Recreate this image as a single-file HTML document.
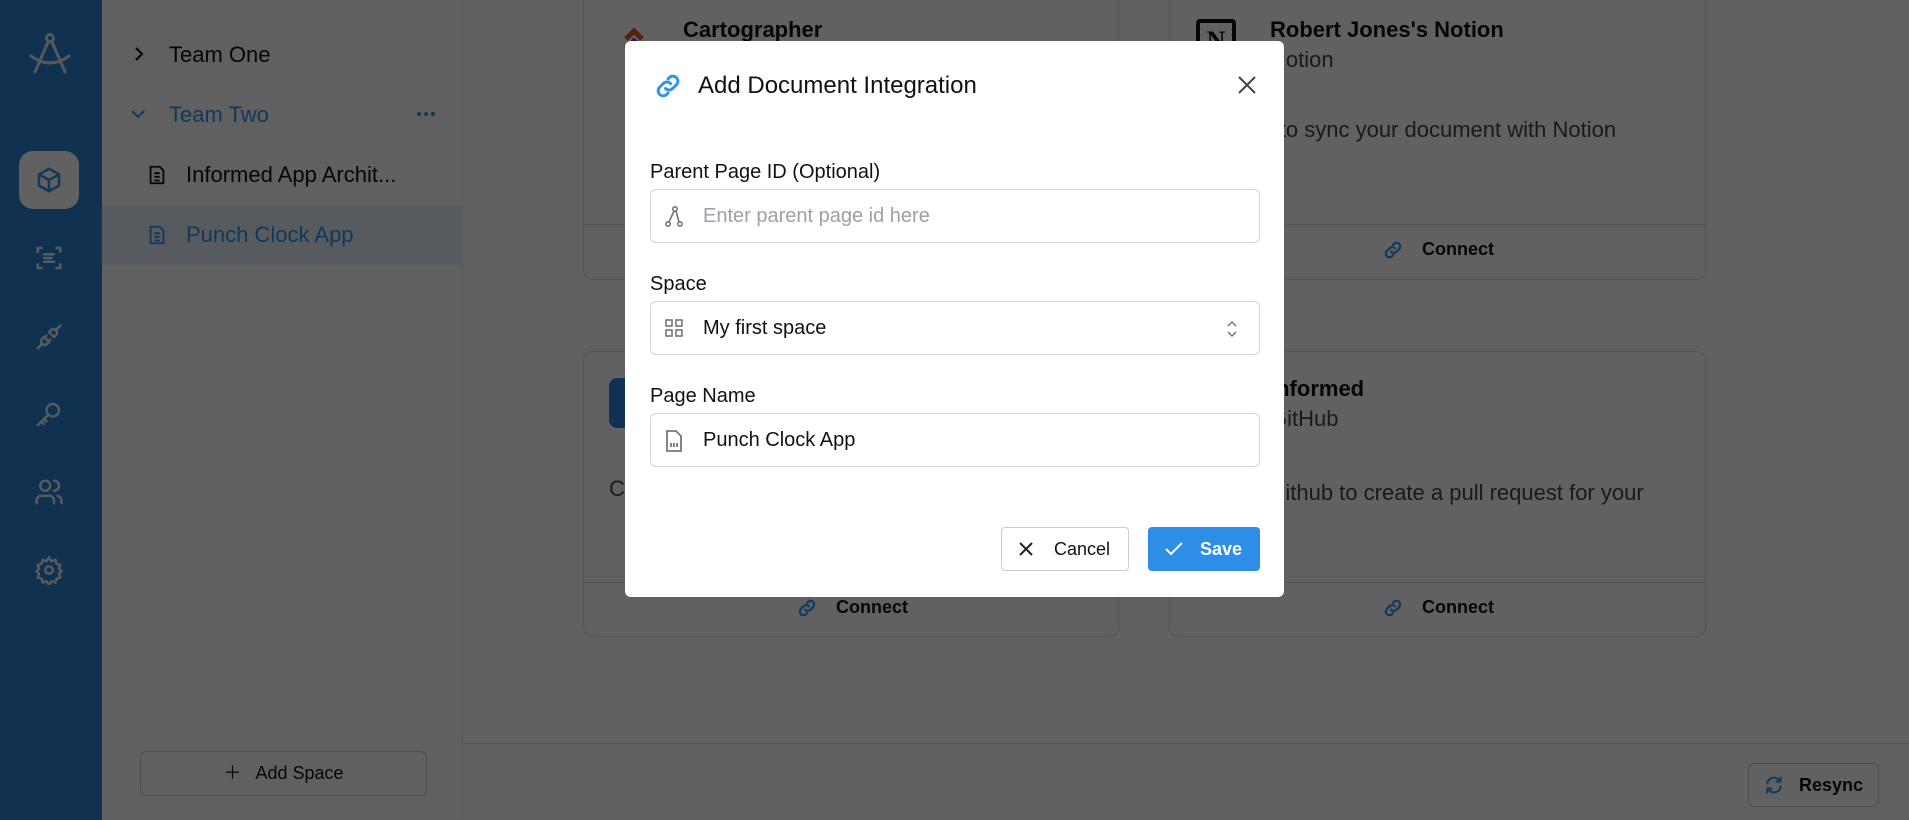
<!DOCTYPE html>
<html><head><meta charset="utf-8"><style>
*{box-sizing:border-box;margin:0;padding:0}
body{width:1909px;height:820px;overflow:hidden;font-family:"Liberation Sans",sans-serif;background:#fff;position:relative;color:#111}
.abs{position:absolute}
.nav{left:0;top:0;width:102px;height:820px;background:#2a80d2}
.side{left:102px;top:0;width:361px;height:820px;background:#fbfbfb;border-right:1px solid #eaeaea}
.card{border:1px solid #ddd;border-radius:10px;background:#fff}
.overlay{left:0;top:0;width:1909px;height:820px;background:rgba(0,0,0,0.62)}
.modal{left:625px;top:41px;width:659px;height:556px;background:#fff;border-radius:6px}
.lbl{font-size:20px;color:#111}
.inp{left:25px;width:610px;height:54px;border:1px solid #d3d7dc;border-radius:6px;font-size:20px;display:flex;align-items:center;padding-left:52px}
.t22{font-size:22px}
.conn{font-size:18px;font-weight:bold}
</style></head><body>
<div class="abs nav">
 <svg class="abs" style="left:27px;top:30px" width="46" height="46" viewBox="0 0 46 46" fill="none" stroke="#dce9f7" stroke-width="3" stroke-linecap="round"><circle cx="23" cy="8" r="3.5"/><path d="M21 12 L8 42 M25 12 L38 42 M4 26 Q23 40 42 26"/></svg>
 <div class="abs" style="left:19px;top:151px;width:60px;height:58px;border-radius:14px;background:#fff"></div>
 <svg class="abs" style="left:34px;top:165px" width="30" height="30" viewBox="0 0 24 24" fill="none" stroke="#3094ec" stroke-width="2" stroke-linejoin="round"><path d="M12 3l8 4.5v9L12 21l-8-4.5v-9z M4 7.5l8 4.5 8-4.5 M12 12v9"/></svg>
 <svg class="abs" style="left:34px;top:243px" width="30" height="30" viewBox="0 0 24 24" fill="none" stroke="#e3eefa" stroke-width="2" stroke-linecap="round"><path d="M3 7V4h3M18 4h3v3M21 17v3h-3M6 20H3v-3M8 9h8M8 12h6M8 15h8"/></svg>
 <svg class="abs" style="left:34px;top:322px" width="30" height="30" viewBox="0 0 24 24" fill="none" stroke="#e3eefa" stroke-width="2" stroke-linecap="round"><path d="M3 21l3-3M21 3l-3 3M8 12l-2 2a3 3 0 004 4l2-2zM16 12l2-2a3 3 0 00-4-4l-2 2zM10 11l-1 1M13 14l-1 1"/></svg>
 <svg class="abs" style="left:34px;top:399px" width="30" height="30" viewBox="0 0 24 24" fill="none" stroke="#e3eefa" stroke-width="2" stroke-linecap="round"><circle cx="15" cy="9" r="5"/><path d="M11 13l-8 8M6 18l2 2M8 16l2 2"/></svg>
 <svg class="abs" style="left:34px;top:477px" width="30" height="30" viewBox="0 0 24 24" fill="none" stroke="#e3eefa" stroke-width="2" stroke-linecap="round"><circle cx="9" cy="7" r="4"/><path d="M2 21v-2a4 4 0 014-4h6a4 4 0 014 4v2M16 3a4 4 0 010 8M22 21v-2a4 4 0 00-3-4"/></svg>
 <svg class="abs" style="left:34px;top:555px" width="30" height="30" viewBox="0 0 24 24" fill="none" stroke="#e3eefa" stroke-width="2"><circle cx="12" cy="12" r="3"/><path d="M12 2l2 3 3-1 1 3 3 1-1 3 2 2-2 2 1 3-3 1-1 3-3-1-2 3-2-3-3 1-1-3-3-1 1-3-2-2 2-2-1-3 3-1 1-3 3 1z"/></svg>
</div>
<div class="abs side">
 <svg class="abs" style="left:30px;top:46px" width="14" height="16" viewBox="0 0 14 16" fill="none" stroke="#111" stroke-width="2.2"><path d="M4 2l6 6-6 6"/></svg>
 <div class="abs t22" style="left:67px;top:42px">Team One</div>
 <svg class="abs" style="left:28px;top:108px" width="16" height="12" viewBox="0 0 16 12" fill="none" stroke="#3094ec" stroke-width="2"><path d="M2 3l6 6 6-6"/></svg>
 <div class="abs t22" style="left:67px;top:102px;color:#3094ec">Team Two</div>
 <svg class="abs" style="left:314px;top:111px" width="20" height="6"><circle cx="3" cy="3" r="2" fill="#3094ec"/><circle cx="10" cy="3" r="2" fill="#3094ec"/><circle cx="17" cy="3" r="2" fill="#3094ec"/></svg>
 <svg class="abs" style="left:44px;top:164px" width="22" height="22" viewBox="0 0 24 24" fill="none" stroke="#111" stroke-width="2"><path d="M5 3h10l4 4v14H5z M9 10h6M9 14h6M9 18h6"/></svg>
 <div class="abs t22" style="left:84px;top:162px">Informed App Archit...</div>
 <div class="abs" style="left:0;top:205px;width:361px;height:60px;background:#e4eef9"></div>
 <svg class="abs" style="left:44px;top:224px" width="22" height="22" viewBox="0 0 24 24" fill="none" stroke="#3094ec" stroke-width="2"><path d="M5 3h10l4 4v14H5z M9 10h6M9 14h6M9 18h6"/></svg>
 <div class="abs t22" style="left:84px;top:222px;color:#3094ec">Punch Clock App</div>
 <div class="abs" style="left:38px;top:751px;width:287px;height:45px;border:1px solid #ccc;border-radius:6px;font-size:18px;text-align:center;line-height:43px">＋&nbsp;&nbsp; Add Space</div>
</div>
<div class="abs card" style="left:583px;top:-20px;width:536px;height:300px"><div class="abs" style="left:0;top:243px;width:534px;border-top:1px solid #ddd"></div>
 <svg class="abs" style="left:38px;top:46px" width="24" height="30" viewBox="0 0 24 30" fill="none" stroke-width="5"><path d="M4 12L12 4l8 8" stroke="#e0522f"/><path d="M4 22l8-8 8 8" stroke="#7a2fd0"/></svg>
</div>
<div class="abs card" style="left:1169px;top:-20px;width:537px;height:300px"><div class="abs" style="left:0;top:243px;width:535px;border-top:1px solid #ddd"></div>
 <div class="abs" style="left:26px;top:38px;width:40px;height:42px;border:4px solid #111;border-radius:4px;background:#fff;font:bold 26px 'Liberation Serif',serif;text-align:center;line-height:36px">N</div>
 <div class="abs t22" style="left:100px;top:36px;font-weight:bold">Robert Jones's Notion</div>
 <div class="abs t22" style="left:100px;top:66px;color:#444">Notion</div>
 <div class="abs t22" style="left:56px;top:136px;color:#444">Click to sync your document with Notion</div>
 <svg class="abs" style="left:212px;top:258px" width="22" height="22" viewBox="0 0 24 24" fill="none" stroke="#3094ec" stroke-width="2.4" stroke-linecap="round"><path d="M10 14a4 4 0 005.7 0l3-3a4 4 0 00-5.7-5.7l-1 1M14 10a4 4 0 00-5.7 0l-3 3a4 4 0 005.7 5.7l1-1"/></svg>
 <div class="abs conn" style="left:252px;top:258px">Connect</div>
</div>
<div class="abs" style="left:683px;top:17px;font-size:22px;font-weight:bold">Cartographer</div>
<div class="abs card" style="left:583px;top:351px;width:536px;height:286px"><div class="abs" style="left:0;top:230px;width:534px;border-top:1px solid #ddd"></div>
 <div class="abs" style="left:25px;top:26px;width:50px;height:50px;background:#2a7fe0;border-radius:8px"></div>
 <div class="abs t22" style="left:25px;top:124px;color:#444">Co</div>
 <svg class="abs" style="left:212px;top:245px" width="22" height="22" viewBox="0 0 24 24" fill="none" stroke="#3094ec" stroke-width="2.4" stroke-linecap="round"><path d="M10 14a4 4 0 005.7 0l3-3a4 4 0 00-5.7-5.7l-1 1M14 10a4 4 0 00-5.7 0l-3 3a4 4 0 005.7 5.7l1-1"/></svg>
 <div class="abs conn" style="left:252px;top:245px">Connect</div>
</div>
<div class="abs card" style="left:1169px;top:351px;width:537px;height:286px"><div class="abs" style="left:0;top:230px;width:535px;border-top:1px solid #ddd"></div>
 <div class="abs t22" style="left:100px;top:24px;font-weight:bold">Informed</div>
 <div class="abs t22" style="left:100px;top:54px;color:#444">GitHub</div>
 <div class="abs t22" style="left:20px;top:124px;color:#444;line-height:34px">Click to Github to create a pull request for your<br>doc.</div>
 <svg class="abs" style="left:212px;top:245px" width="22" height="22" viewBox="0 0 24 24" fill="none" stroke="#3094ec" stroke-width="2.4" stroke-linecap="round"><path d="M10 14a4 4 0 005.7 0l3-3a4 4 0 00-5.7-5.7l-1 1M14 10a4 4 0 00-5.7 0l-3 3a4 4 0 005.7 5.7l1-1"/></svg>
 <div class="abs conn" style="left:252px;top:245px">Connect</div>
</div>
<div class="abs" style="left:463px;top:743px;width:1446px;border-top:1px solid #e3e3e3"></div>
<div class="abs" style="left:1748px;top:763px;width:131px;height:44px;border:1px solid #ccc;border-radius:6px;font-size:18px;line-height:42px;padding-left:50px;font-weight:bold">Resync</div>
<svg class="abs" style="left:1764px;top:775px" width="20" height="20" viewBox="0 0 24 24" fill="none" stroke="#3094ec" stroke-width="2.4" stroke-linecap="round"><path d="M4 10a8 8 0 0114-4l2 2M20 14a8 8 0 01-14 4l-2-2M20 3v5h-5M4 21v-5h5"/></svg>
<div class="abs overlay"></div>
<div class="abs modal">
 <svg class="abs" style="left:28px;top:30px" width="30" height="30" viewBox="0 0 24 24" fill="none" stroke="#3094ec" stroke-width="2.4" stroke-linecap="round"><path d="M10 14a4 4 0 005.7 0l3-3a4 4 0 00-5.7-5.7l-1 1M14 10a4 4 0 00-5.7 0l-3 3a4 4 0 005.7 5.7l1-1"/></svg>
 <div class="abs" style="left:73px;top:31px;font-size:24px">Add Document Integration</div>
 <svg class="abs" style="left:612px;top:34px" width="20" height="20" viewBox="0 0 20 20" stroke="#444" stroke-width="2"><path d="M2 2L18 18M18 2L2 18"/></svg>
 <div class="abs lbl" style="left:25px;top:120px">Parent Page ID (Optional)</div>
 <div class="abs inp" style="top:148px;color:#9aa1a9">Enter parent page id here</div>
 <svg class="abs" style="left:38px;top:163px" width="22" height="26" viewBox="0 0 22 24" fill="none" stroke="#777" stroke-width="1.6"><circle cx="12" cy="4" r="2.2"/><circle cx="5" cy="19" r="2.2"/><circle cx="17" cy="19" r="2.2"/><path d="M11 6L6 17M13 6l3 11"/></svg>
 <div class="abs lbl" style="left:25px;top:232px">Space</div>
 <div class="abs inp" style="top:260px">My first space</div>
 <svg class="abs" style="left:39px;top:277px" width="20" height="20" viewBox="0 0 20 20" fill="none" stroke="#777" stroke-width="1.6"><rect x="2" y="2" width="6" height="6"/><rect x="12" y="2" width="6" height="6"/><rect x="2" y="12" width="6" height="6"/><rect x="12" y="12" width="6" height="6"/></svg>
 <svg class="abs" style="left:600px;top:278px" width="14" height="20" viewBox="0 0 14 20" fill="none" stroke="#777" stroke-width="1.5"><path d="M3 7l4-4 4 4M3 13l4 4 4-4"/></svg>
 <div class="abs lbl" style="left:25px;top:344px">Page Name</div>
 <div class="abs inp" style="top:372px">Punch Clock App</div>
 <svg class="abs" style="left:39px;top:388px" width="20" height="24" viewBox="0 0 20 24" fill="none" stroke="#777" stroke-width="1.8"><path d="M3 2h9l5 5v15H3z"/><path d="M7 14v4M10 14v4M13 14v4"/></svg>
 <div class="abs" style="left:376px;top:486px;width:128px;height:44px;border:1px solid #ccc;border-radius:4px;font-size:18px;line-height:42px;padding-left:52px">Cancel</div>
 <svg class="abs" style="left:394px;top:501px" width="14" height="14" viewBox="0 0 14 14" stroke="#222" stroke-width="2"><path d="M1 1L13 13M13 1L1 13"/></svg>
 <div class="abs" style="left:523px;top:486px;width:112px;height:44px;background:#2e8de6;border-radius:4px;font-size:18px;line-height:44px;color:#fff;padding-left:52px;font-weight:bold">Save</div>
 <svg class="abs" style="left:540px;top:501px" width="18" height="14" viewBox="0 0 18 14" fill="none" stroke="#fff" stroke-width="2"><path d="M1 7l5 5L17 1"/></svg>
</div>
</body></html>
